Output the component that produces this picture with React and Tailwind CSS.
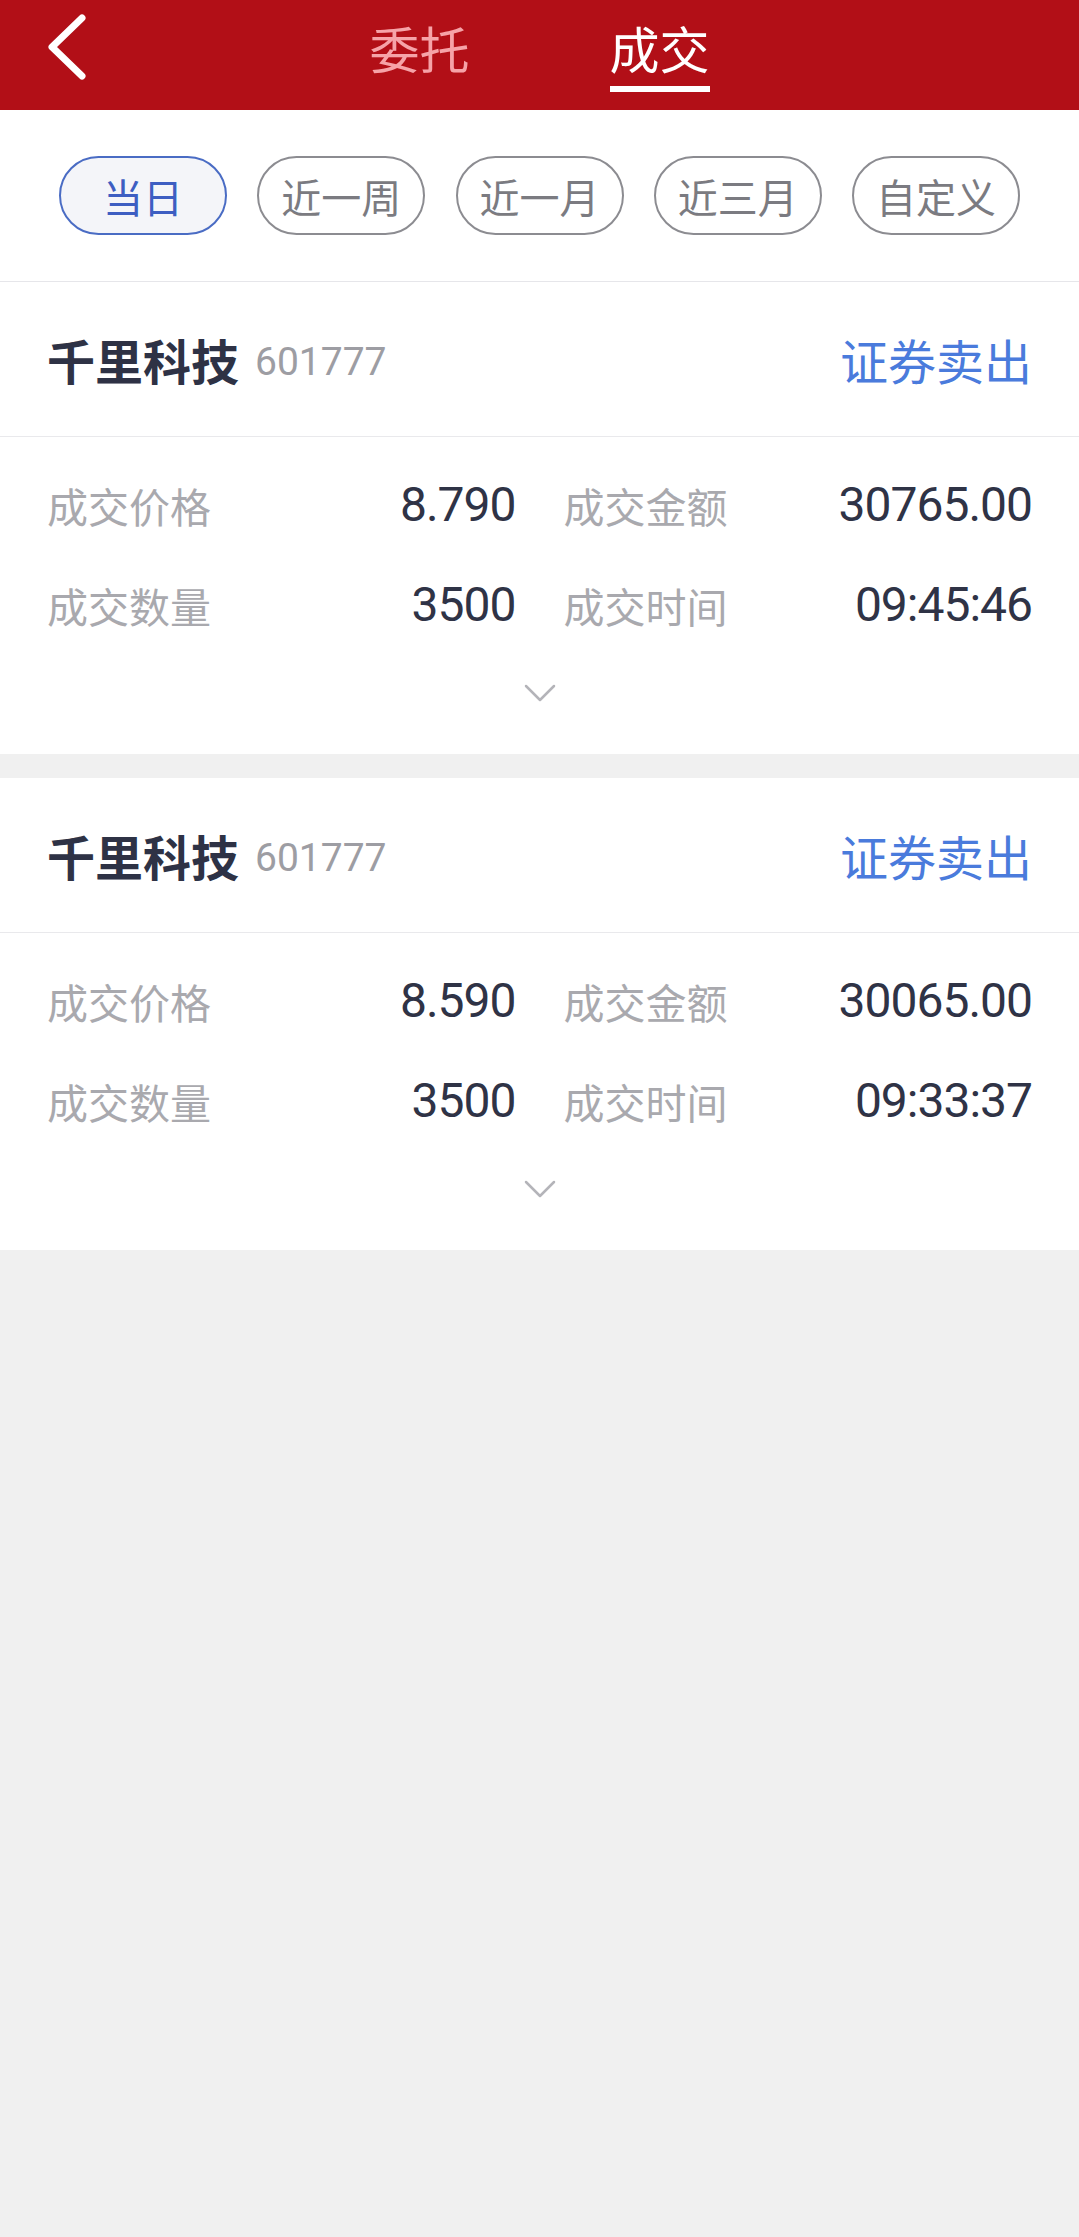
import React from "react";

const CJK = { fontFamily: '"Noto Sans CJK SC", "Noto Sans", sans-serif' };
const NUM = { fontFamily: 'Roboto, "Noto Sans CJK SC", sans-serif' };

function Chevron() {
  return (
    <svg width="32" height="18" viewBox="0 0 32 18" fill="none">
      <polyline points="2,2 16,16 30,2" stroke="#b4b4b9" strokeWidth="2.5" strokeLinecap="round" strokeLinejoin="round" />
    </svg>
  );
}

function Card({ price, amount, qty, time }) {
  return (
    <div className="bg-white">
      <div className="h-[155px] flex items-center justify-between px-[47px] border-b border-[#e9e9ec]">
        <div className="flex items-center">
          <span className="text-[48px] font-bold text-[#2e3245] leading-none" style={CJK}>千里科技</span>
          <span className="ml-[16px] mt-[6px] text-[39px] text-[#9d9da3] leading-none" style={NUM}>601777</span>
        </div>
        <span className="text-[48px] text-[#4a7bdc] leading-none" style={CJK}>证券卖出</span>
      </div>
      <div className="pt-[18px] pb-[23px] px-[47px]">
        <div className="grid grid-cols-2 gap-x-[48px]">
          <Row label="成交价格" value={price} />
          <Row label="成交金额" value={amount} />
          <Row label="成交数量" value={qty} />
          <Row label="成交时间" value={time} />
        </div>
        <div className="h-[76px] flex items-center justify-center">
          <Chevron />
        </div>
      </div>
    </div>
  );
}

function Row({ label, value }) {
  return (
    <div className="h-[100px] flex items-center justify-between">
      <span className="text-[41px] text-[#a9a9ae] leading-none" style={CJK}>{label}</span>
      <span className="text-[48px] tracking-[-1px] text-[#2f3346] leading-none" style={NUM}>{value}</span>
    </div>
  );
}

const pills = ["当日", "近一周", "近一月", "近三月", "自定义"];

export default function App() {
  return (
    <div className="min-h-screen bg-[#f0f0f0]" style={CJK}>
      <div className="h-[110px] bg-[#b20f17] relative flex items-center justify-center">
        <svg className="absolute left-[44px] top-[14px]" width="48" height="66" viewBox="0 0 48 66" fill="none">
          <polyline points="38,4 8,33 38,62" stroke="#ffffff" strokeWidth="7" strokeLinecap="round" strokeLinejoin="round" />
        </svg>
        <div className="flex items-start gap-[140px] mt-[4px]">
          <div className="flex flex-col items-center">
            <span className="text-[50px] leading-none text-[#f6a3a8]">委托</span>
          </div>
          <div className="flex flex-col items-center">
            <span className="text-[50px] leading-none text-white">成交</span>
            <div className="mt-[14px] h-[6px] w-[100px] bg-white" />
          </div>
        </div>
      </div>
      <div className="bg-white h-[172px] flex items-center justify-between px-[59px] border-b border-[#e6e6ea]">
        {pills.map((p, i) => (
          <div
            key={p}
            className={
              i === 0
                ? "w-[168px] h-[79px] rounded-full border-2 border-[#4a6cc4] bg-[#f4f5f9] text-[#3d5ec2] flex items-center justify-center text-[40px] leading-none"
                : "w-[168px] h-[79px] rounded-full border-2 border-[#8c8c91] bg-white text-[#7b7b81] flex items-center justify-center text-[40px] leading-none"
            }
          >
            {p}
          </div>
        ))}
      </div>
      <Card price="8.790" amount="30765.00" qty="3500" time="09:45:46" />
      <div className="h-[24px]" />
      <Card price="8.590" amount="30065.00" qty="3500" time="09:33:37" />
    </div>
  );
}
